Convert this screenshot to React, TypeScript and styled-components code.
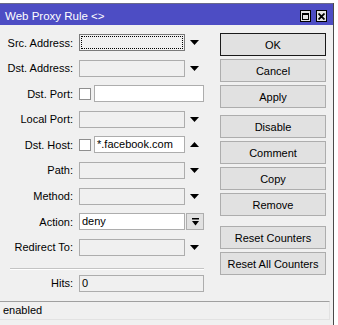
import React, { FC } from 'react';
import styled, { createGlobalStyle } from 'styled-components';

const GlobalStyle = createGlobalStyle`
html, body {
  margin: 0;
  padding: 0;
  background: #fff;
}
body {
  font-family: "Liberation Sans", Arial, sans-serif;
  font-size: 11px;
  color: #000;
}
`;

const Page = styled.div`
width: 338px;
height: 325px;
padding-top: 3px;
box-sizing: border-box;
background: #fff;
`;

const Window = styled.div`
width: 334px;
height: 322px;
box-sizing: border-box;
border-right: 1px solid #4a4a4a;
background: #f0f0f0;
display: flex;
flex-direction: column;
`;

const TitleBar = styled.div`
height: 22px;
flex: none;
box-sizing: border-box;
background: #4d4dc4;
border-top: 1px solid #6a6a8a;
display: flex;
align-items: center;
padding: 0 6px 0 5px;
color: #fff;
font-size: 11.5px;
`;

const Title = styled.div`
flex: 1;
padding-top: 2px;
`;

const TitleButtons = styled.div`
display: flex;
gap: 5px;
padding-top: 3px;
`;

const TitleButton = styled.div`
width: 11px;
height: 12px;
box-sizing: border-box;
border: 1px solid #000;
background: #e4e4e4;
display: flex;
align-items: center;
justify-content: center;
`;

const Body = styled.div`
height: 276px;
flex: none;
display: flex;
`;

const FormColumn = styled.div`
width: 204px;
padding-top: 9px;
display: flex;
flex-direction: column;
`;

const Rows = styled.div`
display: flex;
flex-direction: column;
gap: 8.6px;
`;

const Row = styled.div`
display: flex;
align-items: center;
height: 17px;
`;

const Label = styled.div`
width: 73px;
margin-right: 6px;
text-align: right;
white-space: nowrap;
flex: none;
`;

const Field = styled.div<{ $width?: number; $white?: boolean; $focus?: boolean }>`
box-sizing: border-box;
height: 17px;
width: ${p => (p.$width ? `${p.$width}px` : 'auto')};
flex: ${p => (p.$width ? 'none' : '1')};
border: 1px solid ${p => (p.$focus ? '#7a7a7a' : '#adadad')};
background: ${p => (p.$white ? '#fff' : '#f0f0f0')};
padding: 0 2px;
line-height: 15px;
white-space: nowrap;
overflow: hidden;
outline: ${p => (p.$focus ? '1px dotted #000' : 'none')};
outline-offset: -3px;
`;

const Check = styled.div`
width: 12px;
height: 12px;
box-sizing: border-box;
border: 1px solid #8f8f8f;
background: #fff;
margin-right: 3px;
flex: none;
`;

const ArrowSlot = styled.div`
width: 19px;
height: 17px;
display: flex;
align-items: center;
justify-content: center;
flex: none;
`;

const DropButton = styled.div`
width: 18px;
height: 17px;
margin-left: 1px;
box-sizing: border-box;
border: 1px solid #adadad;
background: #e1e1e1;
display: flex;
align-items: center;
justify-content: center;
flex: none;
`;

const Separator = styled.div`
margin: 12px 0 5px 10px;
width: 194px;
border-top: 1px solid #c4c4c4;
border-bottom: 1px solid #fff;
`;

const ButtonColumn = styled.div`
margin-left: 16px;
padding-top: 8px;
width: 106px;
display: flex;
flex-direction: column;
gap: 3px;
`;

const Button = styled.button<{ $primary?: boolean; $space?: number }>`
width: 106px;
height: 23px;
box-sizing: border-box;
margin: ${p => p.$space || 0}px 0 0 0;
padding: 0;
border: 1px solid ${p => (p.$primary ? '#1a1a1a' : '#adadad')};
background: #e1e1e1;
font-family: "Liberation Sans", Arial, sans-serif;
font-size: 11px;
color: #000;
`;

const StatusBar = styled.div`
width: 330px;
height: 19px;
box-sizing: border-box;
border-top: 1px solid #a0a0a0;
border-right: 1px solid #e2e2e2;
border-bottom: 1px solid #e2e2e2;
padding-left: 3px;
line-height: 17px;
`;

const Arrow: FC<{ up?: boolean }> = ({ up }) => (
  <svg width="9" height="5" viewBox="0 0 9 5">
    <polygon points={up ? '0,5 9,5 4.5,0' : '0,0 9,0 4.5,5'} fill="#000" />
  </svg>
);

const DropIcon = () => (
  <svg width="7" height="8" viewBox="0 0 7 8">
    <rect x="0" y="0" width="7" height="1.5" fill="#000" />
    <polygon points="0,3 7,3 3.5,7.5" fill="#000" />
  </svg>
);

const MaxIcon = () => (
  <svg width="7" height="7" viewBox="0 0 7 7">
    <rect x="0.5" y="0.5" width="6" height="6" fill="none" stroke="#000" strokeWidth="1" />
    <rect x="0" y="0" width="7" height="2" fill="#000" />
  </svg>
);

const CloseIcon = () => (
  <svg width="7" height="7" viewBox="0 0 7 7">
    <path d="M0.5 0.5 L6.5 6.5 M6.5 0.5 L0.5 6.5" stroke="#000" strokeWidth="1.8" />
  </svg>
);

// combo box: grey field + dropdown arrow
const Combo: FC<{ label: string; focus?: boolean; up?: boolean }> = ({ label, focus, up }) => (
  <Row>
    <Label>{label}</Label>
    <Field $width={106} $focus={focus} />
    <ArrowSlot><Arrow up={up} /></ArrowSlot>
  </Row>
);

export default function App() {
  return (
    <>
      <GlobalStyle />
      <Page>
        <Window>
          <TitleBar>
            <Title>Web Proxy Rule &lt;&gt;</Title>
            <TitleButtons>
              <TitleButton><MaxIcon /></TitleButton>
              <TitleButton><CloseIcon /></TitleButton>
            </TitleButtons>
          </TitleBar>
          <Body>
            <FormColumn>
              <Rows>
                <Combo label="Src. Address:" focus />
                <Combo label="Dst. Address:" />
                <Row>
                  <Label>Dst. Port:</Label>
                  <Check />
                  <Field $white />
                </Row>
                <Combo label="Local Port:" />
                <Row>
                  <Label>Dst. Host:</Label>
                  <Check />
                  <Field $width={91} $white>*.facebook.com</Field>
                  <ArrowSlot><Arrow up /></ArrowSlot>
                </Row>
                <Combo label="Path:" />
                <Combo label="Method:" />
                <Row>
                  <Label>Action:</Label>
                  <Field $width={106} $white>deny</Field>
                  <DropButton><DropIcon /></DropButton>
                </Row>
                <Combo label="Redirect To:" />
              </Rows>
              <Separator />
              <Row>
                <Label>Hits:</Label>
                <Field>0</Field>
              </Row>
            </FormColumn>
            <ButtonColumn>
              <Button $primary>OK</Button>
              <Button>Cancel</Button>
              <Button>Apply</Button>
              <Button $space={4}>Disable</Button>
              <Button>Comment</Button>
              <Button>Copy</Button>
              <Button>Remove</Button>
              <Button $space={7}>Reset Counters</Button>
              <Button>Reset All Counters</Button>
            </ButtonColumn>
          </Body>
          <StatusBar>enabled</StatusBar>
        </Window>
      </Page>
    </>
  );
}
